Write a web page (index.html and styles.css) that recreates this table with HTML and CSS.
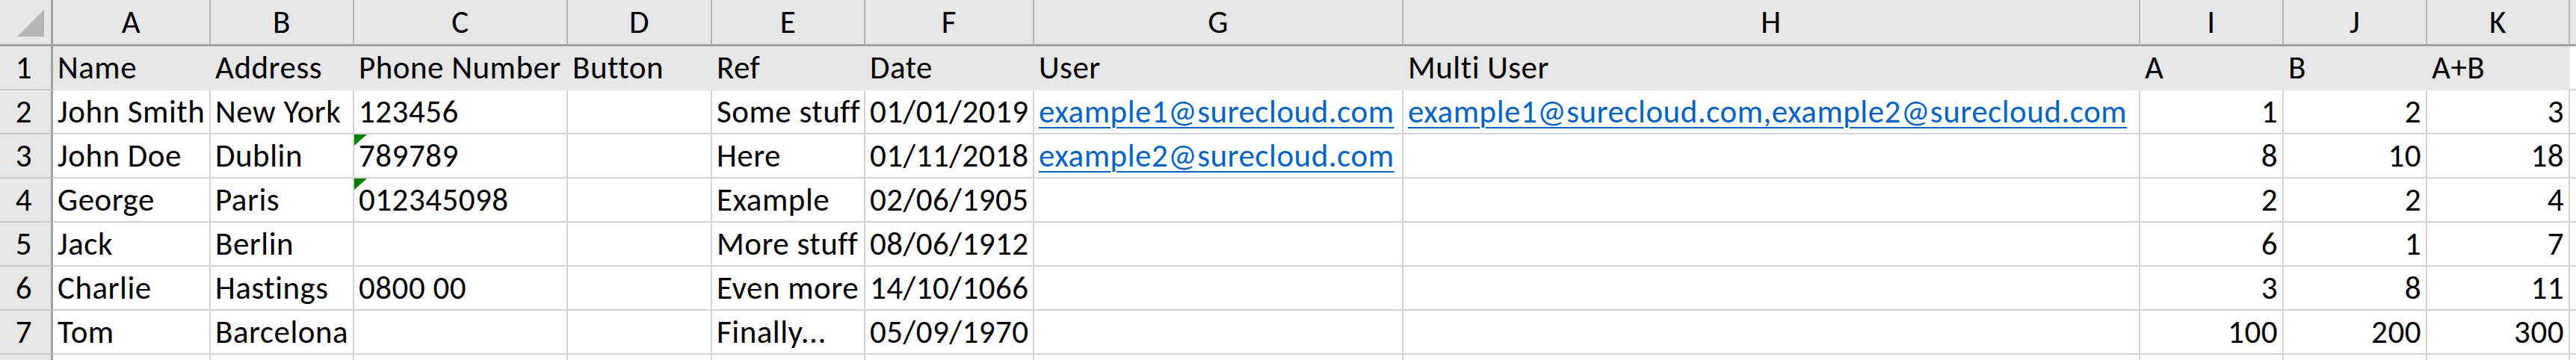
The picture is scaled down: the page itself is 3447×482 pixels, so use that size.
FILE: index.html
```html
<!DOCTYPE html>
<html lang="en">
<head>
<meta charset="utf-8">
<title>Sheet</title>
<link rel="stylesheet" href="styles.css">
</head>
<body>
<div class="sheet">
  <div class="row colhead">
    <div class="corner"><div class="corner-tri"></div></div>
    <div class="ch">A</div><div class="ch">B</div><div class="ch">C</div><div class="ch">D</div><div class="ch">E</div><div class="ch">F</div><div class="ch">G</div><div class="ch">H</div><div class="ch">I</div><div class="ch">J</div><div class="ch">K</div><div class="ch last"></div>
  </div>
  <div class="row r1">
    <div class="rh">1</div>
    <div class="cell fill">Name</div><div class="cell fill">Address</div><div class="cell fill">Phone Number</div><div class="cell fill">Button</div><div class="cell fill">Ref</div><div class="cell fill">Date</div><div class="cell fill">User</div><div class="cell fill">Multi User</div><div class="cell fill">A</div><div class="cell fill">B</div><div class="cell fill">A+B</div><div class="cell"></div>
  </div>
  <div class="row">
    <div class="rh">2</div>
    <div class="cell">John Smith</div><div class="cell">New York</div><div class="cell">123456</div><div class="cell"></div><div class="cell">Some stuff</div><div class="cell">01/01/2019</div><div class="cell"><span class="link">example1@surecloud.com</span></div><div class="cell"><span class="link">example1@surecloud.com,example2@surecloud.com</span></div><div class="cell num">1</div><div class="cell num">2</div><div class="cell num">3</div><div class="cell"></div>
  </div>
  <div class="row">
    <div class="rh">3</div>
    <div class="cell">John Doe</div><div class="cell">Dublin</div><div class="cell flag">789789</div><div class="cell"></div><div class="cell">Here</div><div class="cell">01/11/2018</div><div class="cell"><span class="link">example2@surecloud.com</span></div><div class="cell"></div><div class="cell num">8</div><div class="cell num">10</div><div class="cell num">18</div><div class="cell"></div>
  </div>
  <div class="row">
    <div class="rh">4</div>
    <div class="cell">George</div><div class="cell">Paris</div><div class="cell flag">012345098</div><div class="cell"></div><div class="cell">Example</div><div class="cell">02/06/1905</div><div class="cell"></div><div class="cell"></div><div class="cell num">2</div><div class="cell num">2</div><div class="cell num">4</div><div class="cell"></div>
  </div>
  <div class="row">
    <div class="rh">5</div>
    <div class="cell">Jack</div><div class="cell">Berlin</div><div class="cell"></div><div class="cell"></div><div class="cell">More stuff</div><div class="cell">08/06/1912</div><div class="cell"></div><div class="cell"></div><div class="cell num">6</div><div class="cell num">1</div><div class="cell num">7</div><div class="cell"></div>
  </div>
  <div class="row">
    <div class="rh">6</div>
    <div class="cell">Charlie</div><div class="cell">Hastings</div><div class="cell">0800 00</div><div class="cell"></div><div class="cell">Even more</div><div class="cell">14/10/1066</div><div class="cell"></div><div class="cell"></div><div class="cell num">3</div><div class="cell num">8</div><div class="cell num">11</div><div class="cell"></div>
  </div>
  <div class="row">
    <div class="rh">7</div>
    <div class="cell">Tom</div><div class="cell">Barcelona</div><div class="cell"></div><div class="cell"></div><div class="cell">Finally...</div><div class="cell">05/09/1970</div><div class="cell"></div><div class="cell"></div><div class="cell num">100</div><div class="cell num">200</div><div class="cell num">300</div><div class="cell"></div>
  </div>
  <div class="row">
    <div class="rh"></div>
    <div class="cell"></div><div class="cell"></div><div class="cell"></div><div class="cell"></div><div class="cell"></div><div class="cell"></div><div class="cell"></div><div class="cell"></div><div class="cell"></div><div class="cell"></div><div class="cell"></div><div class="cell"></div>
  </div>
</div>
</body>
</html>
```

FILE: styles.css
```css
* {
  box-sizing: border-box;
  margin: 0;
  padding: 0;
}

html, body {
  width: 3447px;
  height: 482px;
  overflow: hidden;
  background: #ffffff;
}

body {
  font-family: Carlito, Calibri, Lato, sans-serif;
  font-size: 43px;
  letter-spacing: 0.5px;
  color: #000000;
}

.sheet {
  display: flex;
  flex-direction: column;
}

.row {
  display: grid;
  grid-template-columns: 71px 211px 192px 286px 193px 205px 226px 494px 986px 192px 192px 191px 1fr;
  height: 59px;
  flex: none;
}

.colhead {
  height: 62px;
}

.corner {
  background: #e6e6e6;
  border-right: 3px solid #a0a0a0;
  border-bottom: 3px solid #a0a0a0;
  padding: 13px 0 0 23px;
}

.corner-tri {
  width: 36px;
  height: 36px;
  background: #b4b4b4;
  clip-path: polygon(100% 0, 100% 100%, 0 100%);
}

.ch {
  background: #e6e6e6;
  border-right: 2px solid #b4b4b4;
  border-bottom: 3px solid #a0a0a0;
  text-align: center;
  line-height: 59px;
}

.ch.last {
  border-right: none;
}

.rh {
  background: #e6e6e6;
  border-right: 3px solid #a0a0a0;
  border-bottom: 2px solid #cacaca;
  text-align: center;
  padding-right: 4px;
  line-height: 57px;
}

.cell {
  position: relative;
  border-right: 2px solid #d4d4d4;
  border-bottom: 2px solid #d4d4d4;
  padding: 0 6px;
  line-height: 57px;
  white-space: nowrap;
  overflow: hidden;
}

.cell.fill {
  background: #e6e6e6;
  border-color: #e6e6e6;
}

.num {
  text-align: right;
}

.link {
  color: #0563c1;
  text-decoration: underline;
  text-decoration-thickness: 2px;
  text-underline-offset: 6px;
}

.flag::before {
  content: "";
  position: absolute;
  top: 0;
  left: 0;
  width: 17px;
  height: 15px;
  background: #008000;
  clip-path: polygon(0 0, 100% 0, 0 100%);
}
```
